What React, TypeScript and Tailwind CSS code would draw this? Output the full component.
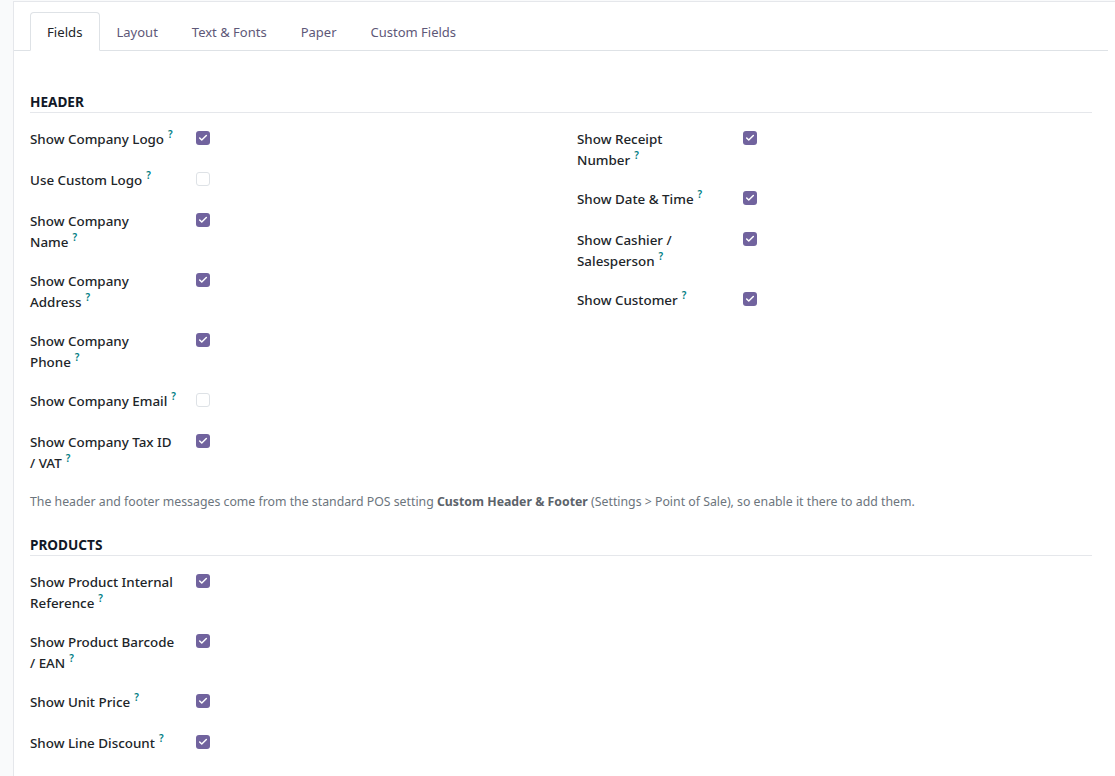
import { Check } from "lucide-react";

type Field = { lines: string[]; checked: boolean };

const headerLeft: Field[] = [
  { lines: ["Show Company Logo"], checked: true },
  { lines: ["Use Custom Logo"], checked: false },
  { lines: ["Show Company", "Name"], checked: true },
  { lines: ["Show Company", "Address"], checked: true },
  { lines: ["Show Company", "Phone"], checked: true },
  { lines: ["Show Company Email"], checked: false },
  { lines: ["Show Company Tax ID", "/ VAT"], checked: true },
];

const headerRight: Field[] = [
  { lines: ["Show Receipt", "Number"], checked: true },
  { lines: ["Show Date & Time"], checked: true },
  { lines: ["Show Cashier /", "Salesperson"], checked: true },
  { lines: ["Show Customer"], checked: true },
];

const products: Field[] = [
  { lines: ["Show Product Internal", "Reference"], checked: true },
  { lines: ["Show Product Barcode", "/ EAN"], checked: true },
  { lines: ["Show Unit Price"], checked: true },
  { lines: ["Show Line Discount"], checked: true },
];

const tabs = ["Fields", "Layout", "Text & Fonts", "Paper", "Custom Fields"];

function Checkbox({ checked }: { checked: boolean }) {
  if (checked) {
    return (
      <span className="mt-[1px] flex h-[14px] w-[14px] items-center justify-center rounded-[3px] bg-[#71639e]">
        <Check size={10} strokeWidth={3.5} className="text-white" />
      </span>
    );
  }
  return <span className="mt-[1px] block h-[14px] w-[14px] rounded-[3px] border border-[#dee2e6] bg-white" />;
}

function FieldRow({ field }: { field: Field }) {
  const last = field.lines.length - 1;
  return (
    <div className={`flex min-h-[21px] ${field.lines.length > 1 ? "mb-[18px]" : "mb-[20px]"}`}>
      <div className="w-[166px] pr-[12px] text-[13.4px] font-medium leading-[21px] text-[#212529]">
        {field.lines.map((line, i) => (
          <div key={line} className="whitespace-nowrap">
            {line}
            {i === last && (
              <span className="relative -top-[6px] ml-[4px] text-[10px] leading-none font-semibold text-[#017e84]">?</span>
            )}
          </div>
        ))}
      </div>
      <div className="pt-[1px]">
        <Checkbox checked={field.checked} />
      </div>
    </div>
  );
}

function Section({ title }: { title: string }) {
  return (
    <div className="border-b border-[#e5e7eb] text-[13.6px] font-bold uppercase leading-[20px] text-[#111827]">
      {title}
    </div>
  );
}

export default function App() {
  return (
    <div
      className="min-h-screen bg-[#f9fafb] pl-[13px] pt-[1px]"
      style={{ fontFamily: '"Noto Sans", "Open Sans", sans-serif' }}
    >
      <div className="min-h-[775px] border-l border-t border-[#e5e7eb] bg-white">
        {/* tabs */}
        <div className="mr-[7px] flex border-b border-[#dee2e6] pl-[16px] pt-[10px]">
          {tabs.map((t, i) => (
            <div
              key={t}
              className={
                i === 0
                  ? "-mb-px rounded-t-[4px] border border-[#dee2e6] border-b-white bg-white px-4 pt-[9px] pb-[8px] text-[13.2px] leading-[20px] text-[#212529]"
                  : "-mb-px border border-transparent px-4 pt-[9px] pb-[8px] text-[13px] leading-[20px] text-[#5e5878]"
              }
            >
              {t}
            </div>
          ))}
        </div>

        <div className="pl-[16px] pr-[23px] pt-[41px]">
          <Section title="Header" />
          <div className="mt-4 grid grid-cols-2 gap-x-8">
            <div>
              {headerLeft.map((f) => (
                <FieldRow key={f.lines.join(" ")} field={f} />
              ))}
            </div>
            <div>
              {headerRight.map((f) => (
                <FieldRow key={f.lines.join(" ")} field={f} />
              ))}
            </div>
          </div>

          <p className="whitespace-nowrap text-[12.3px] leading-[20px] text-[#6c757d]">
            The header and footer messages come from the standard POS setting{" "}
            <span className="font-bold text-[#5c636a]">Custom Header &amp; Footer</span> (Settings &gt; Point of Sale), so
            enable it there to add them.
          </p>

          <div className="mt-[23px]">
            <Section title="Products" />
          </div>
          <div className="mt-4 grid grid-cols-2 gap-x-8">
            <div>
              {products.map((f) => (
                <FieldRow key={f.lines.join(" ")} field={f} />
              ))}
            </div>
            <div />
          </div>
        </div>
      </div>
    </div>
  );
}
